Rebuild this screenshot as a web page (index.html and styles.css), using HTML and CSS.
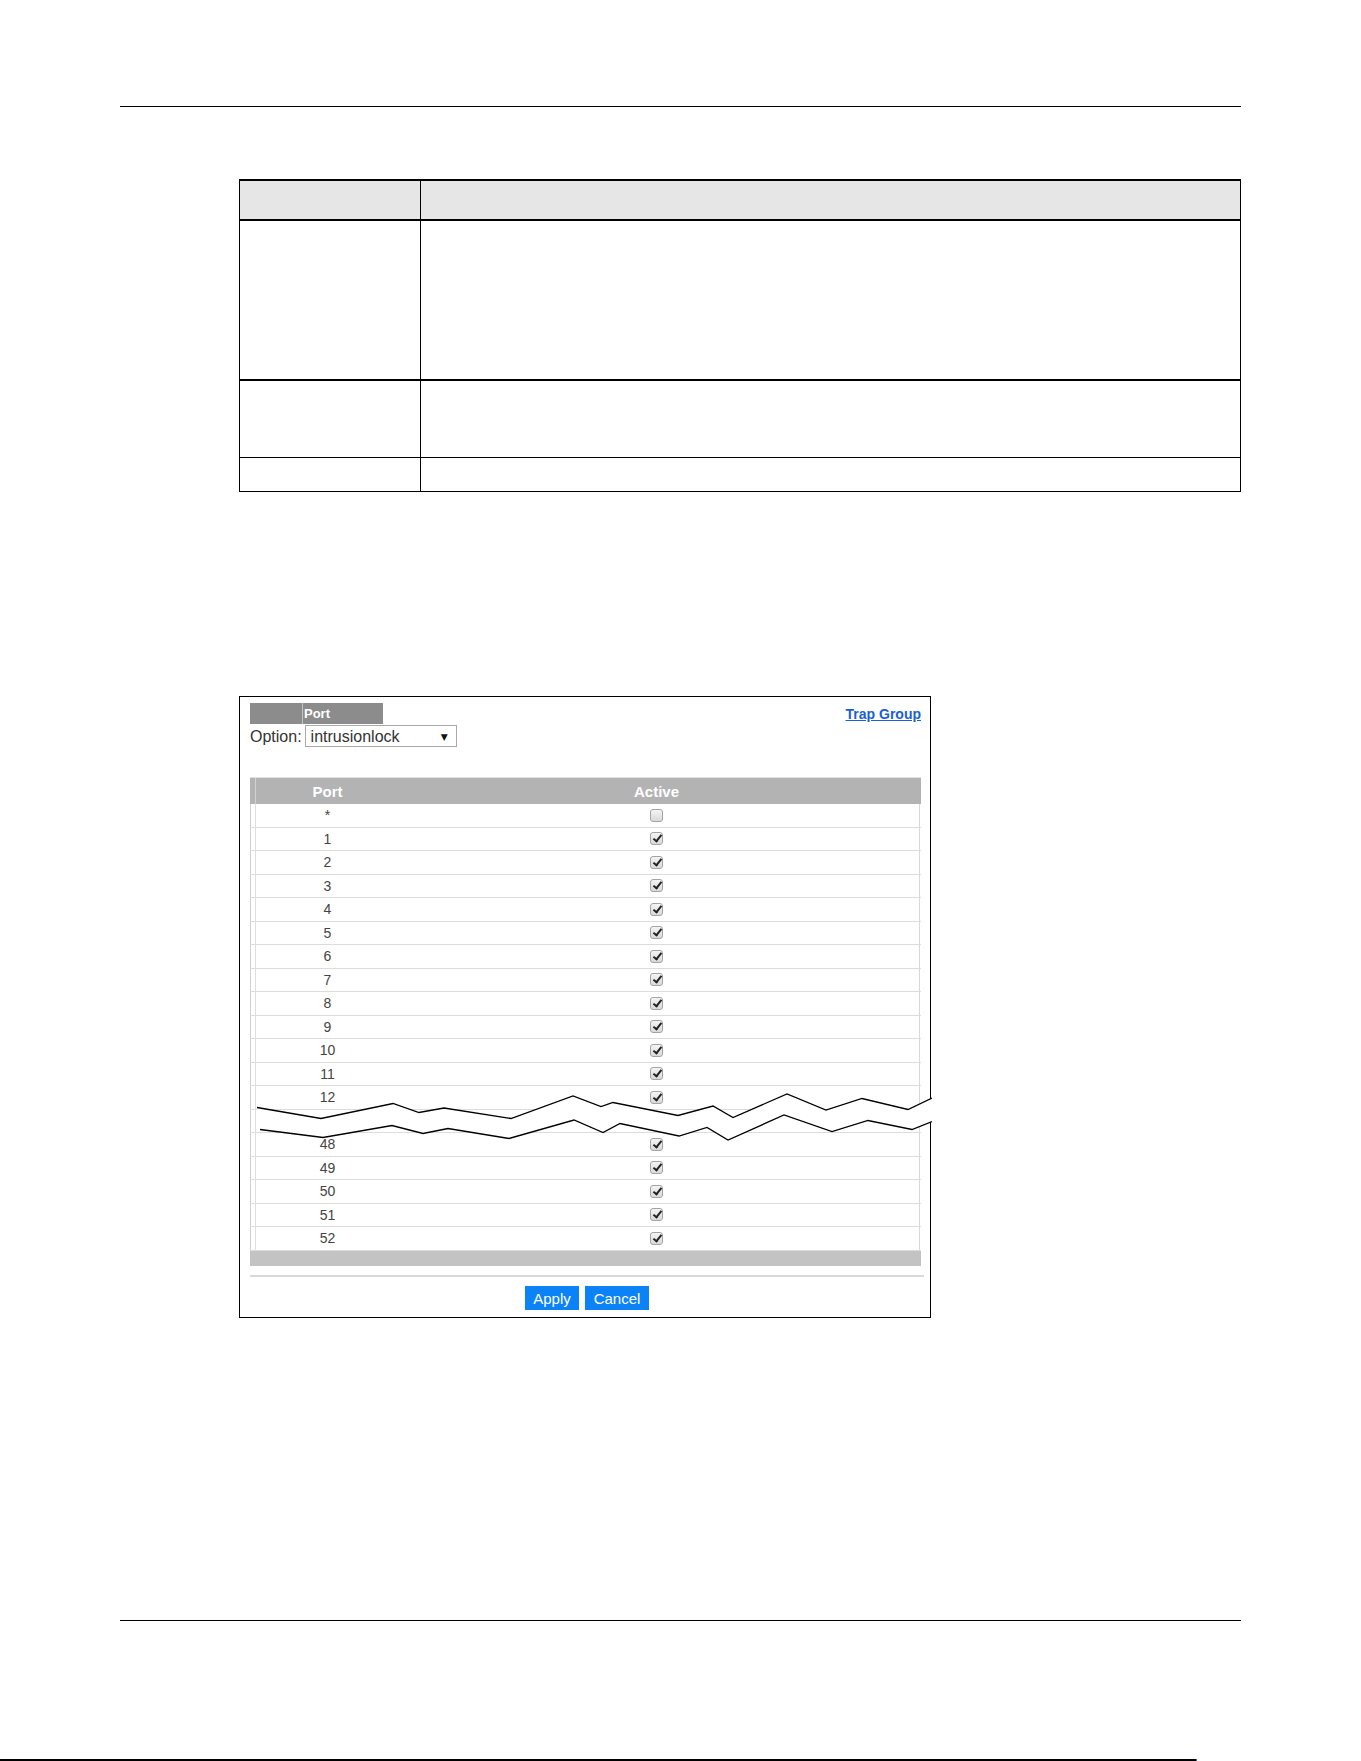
FILE: index.html
```html
<!DOCTYPE html>
<html lang="en">
<head>
<meta charset="utf-8">
<title>Port Security - Trap Group</title>
<meta name="viewport" content="width=device-width, initial-scale=1">

<link rel="stylesheet" href="styles.css">
</head>

<body>
<div class="rule"></div>

<!-- field / description table (cells left blank) -->
<div class="ref">
	<div class="ref-row ref-head"><div class="ref-key"></div><div></div></div>
	<div class="ref-row ref-tall"><div class="ref-key"></div><div></div></div>
	<div class="ref-row ref-mid"><div class="ref-key"></div><div></div></div>
	<div class="ref-row ref-low"><div class="ref-key"></div><div></div></div>
</div>

<div class="panel">
	<div class="tabbar">
		<div class="tab"><span class="tab-blank"></span><span class="tab-name">Port</span></div>
		<a href="#" class="trap-link">Trap Group</a>
	</div>
	<div class="option">
		<span class="option-label">Option:</span>
		<div class="select">intrusionlock<span class="arrow">&#9660;</span></div>
	</div>

	<div class="ports">
		<div class="ports-head"><span class="num">Port</span><span class="act">Active</span></div>
		<div class="port-row"><span class="num">*</span><span class="act"><span class="cb"></span></span></div>
		<div class="port-row"><span class="num">1</span><span class="act"><span class="cb on"></span></span></div>
		<div class="port-row"><span class="num">2</span><span class="act"><span class="cb on"></span></span></div>
		<div class="port-row"><span class="num">3</span><span class="act"><span class="cb on"></span></span></div>
		<div class="port-row"><span class="num">4</span><span class="act"><span class="cb on"></span></span></div>
		<div class="port-row"><span class="num">5</span><span class="act"><span class="cb on"></span></span></div>
		<div class="port-row"><span class="num">6</span><span class="act"><span class="cb on"></span></span></div>
		<div class="port-row"><span class="num">7</span><span class="act"><span class="cb on"></span></span></div>
		<div class="port-row"><span class="num">8</span><span class="act"><span class="cb on"></span></span></div>
		<div class="port-row"><span class="num">9</span><span class="act"><span class="cb on"></span></span></div>
		<div class="port-row"><span class="num">10</span><span class="act"><span class="cb on"></span></span></div>
		<div class="port-row"><span class="num">11</span><span class="act"><span class="cb on"></span></span></div>
		<div class="port-row"><span class="num">12</span><span class="act"><span class="cb on"></span></span></div>
		<div class="port-row"><span class="num"></span><span class="act"></span></div>
		<div class="port-row"><span class="num">48</span><span class="act"><span class="cb on"></span></span></div>
		<div class="port-row"><span class="num">49</span><span class="act"><span class="cb on"></span></span></div>
		<div class="port-row"><span class="num">50</span><span class="act"><span class="cb on"></span></span></div>
		<div class="port-row"><span class="num">51</span><span class="act"><span class="cb on"></span></span></div>
		<div class="port-row"><span class="num">52</span><span class="act"><span class="cb on"></span></span></div>
		<div class="ports-foot"></div>

		<!-- break mark: rows 13-47 left out -->
		<svg class="cut" width="693" height="55" viewBox="239 1090 693 55">
			<polygon fill="#fff" points="257,1107.5 321,1118.5 393,1103.5 419,1112.5 444,1108 511,1118.5 573,1096 601,1106.5 613,1102.5 678,1115.5 713,1106 733,1117.5 787,1094 826,1110 862,1098.5 908,1109.5 932,1098 932,1121.5 912,1129.5 868,1120.5 832,1131.5 784,1115 728,1140 707,1127.5 679,1136 620,1123.5 603,1132.5 574,1120 509,1138.5 448,1128.5 423,1133.5 392,1125.5 323,1137.5 260,1129.5"/>
			<polyline fill="none" stroke="#000" stroke-width="1.3" points="257,1107.5 321,1118.5 393,1103.5 419,1112.5 444,1108 511,1118.5 573,1096 601,1106.5 613,1102.5 678,1115.5 713,1106 733,1117.5 787,1094 826,1110 862,1098.5 908,1109.5 932,1098"/>
			<polyline fill="none" stroke="#000" stroke-width="1.3" points="260,1129.5 323,1137.5 392,1125.5 423,1133.5 448,1128.5 509,1138.5 574,1120 603,1132.5 620,1123.5 679,1136 707,1127.5 728,1140 784,1115 832,1131.5 868,1120.5 912,1129.5 932,1121.5"/>
		</svg>
	</div>

	<div class="sep"></div>
	<div class="actions">
		<button type="button" class="btn btn-apply">Apply</button>
		<button type="button" class="btn btn-cancel">Cancel</button>
	</div>
</div>

<div class="rule rule-foot"></div>
<div class="edge"><span class="edge-tick"></span></div>
</body>
</html>
```

FILE: styles.css
```css
body { margin: 0; background: #fff; font-family: "Liberation Sans", Arial, sans-serif; }

.rule { margin: 106px 0 0 120px; width: 1121px; border-top: 1px solid #000; }
.rule-foot { margin-top: 302px; }

.edge { margin-top: 138px; width: 1196px; border-top: 2px solid #000; display: flex; justify-content: flex-end; }
.edge-tick { width: 1px; height: 2px; margin: -2px -1px 0 0; background: #2a6ef0; }

/* description table */
.ref {
    margin: 72px 0 0 239px;
    width: 1002px;
    box-sizing: border-box;
    border-left: 1px solid #000;
    border-right: 1px solid #000;
    border-top: 2px solid #000;
}
.ref-row { display: grid; grid-template-columns: 181px 1fr; }
.ref-key { border-right: 1px solid #000; }
.ref-head { height: 38px; background: #e6e6e6; border-bottom: 2px solid #000; }
.ref-tall { height: 158px; border-bottom: 2px solid #000; }
.ref-mid { height: 76px; border-bottom: 1px solid #000; }
.ref-low { height: 33px; border-bottom: 1px solid #000; }

/* port screen */
.panel {
    margin: 204px 0 0 239px;
    width: 692px;
    box-sizing: border-box;
    border: 1px solid #000;
    padding: 6px 6px 7px 10px;
    color: #333;
}

.tabbar { display: flex; justify-content: space-between; height: 21px; padding-right: 3px; }
.tab { display: flex; width: 133px; height: 21px; background: #8c8c8c; }
.tab-blank { width: 52px; border-right: 1px solid #c4c4c4; }
.tab-name { color: #fff; font-weight: bold; font-size: 13px; line-height: 21px; padding-left: 1px; }
.trap-link { color: #1a5fd6; font-weight: bold; font-size: 14px; line-height: 22px; }

.option { display: flex; align-items: center; margin-top: 1px; height: 22px; }
.option-label { font-size: 16px; color: #333; margin-right: 3px; padding-top: 2px; }
.select {
    position: relative;
    width: 152px;
    height: 22px;
    box-sizing: border-box;
    border: 1px solid #a9a9a9;
    padding: 2px 0 0 5px;
    font-size: 16px;
    line-height: 18px;
    color: #333;
}
.arrow { position: absolute; right: 8px; top: 2px; font-family: "DejaVu Sans", sans-serif; font-size: 9px; color: #111; }

.ports { position: relative; margin-top: 30px; width: 671px; }
.ports-head {
    display: grid;
    grid-template-columns: 155px 1fr;
    align-items: center;
    height: 27px;
    box-sizing: border-box;
    border-top: 1px solid #e0e0e0;
    background: linear-gradient(to right, transparent 5px, #d2d2d2 5px 6px, transparent 6px), #b3b3b3;
    color: #fff;
    font-weight: bold;
    font-size: 15px;
}
.port-row {
    display: grid;
    grid-template-columns: 155px 1fr;
    align-items: center;
    height: 23.5px;
    box-sizing: border-box;
    border-bottom: 1px solid #dcdcdc;
    background: linear-gradient(to right, #d0d0d0 0 1px, transparent 1px 5px, #dedede 5px 6px, transparent 6px calc(100% - 2px), #d8d8d8 calc(100% - 2px) calc(100% - 1px), transparent calc(100% - 1px));
    font-size: 14px;
    color: #444;
}
.num { text-align: center; }
.act { display: flex; justify-content: center; padding-right: 13px; }
.ports-foot { height: 15px; background: #c3c3c3; }

.cb {
    position: relative;
    width: 13px;
    height: 13px;
    box-sizing: border-box;
    border: 1px solid #a4a4a4;
    border-radius: 3px;
    background: linear-gradient(#f4f4f4, #d9d9d9);
}
.cb.on::after {
    content: "";
    position: absolute;
    left: 3.5px;
    top: 0;
    width: 3px;
    height: 7px;
    border: solid #222;
    border-width: 0 2.5px 2.5px 0;
    transform: rotate(38deg);
}

.cut { position: absolute; left: -11px; top: 313px; }

.sep { margin-top: 9.5px; width: 674px; height: 2px; background: #d9d9d9; }
.actions { display: flex; justify-content: center; gap: 6px; margin-top: 9px; width: 674px; }
.btn {
    height: 24px;
    border: 0;
    padding: 0;
    background: #0b83f7;
    color: #fff;
    font-family: "Liberation Sans", Arial, sans-serif;
    font-size: 15px;
}
.btn-apply { width: 54px; }
.btn-cancel { width: 64px; }
```
